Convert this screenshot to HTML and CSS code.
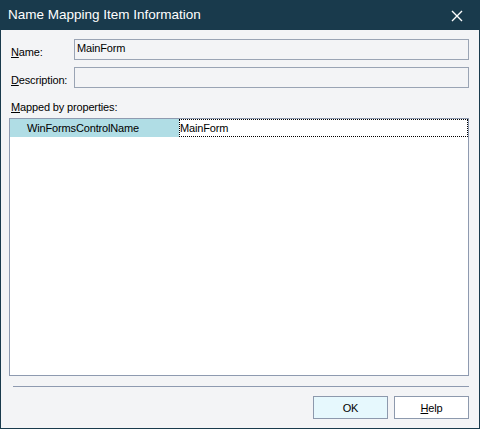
FILE: index.html
```html
<!DOCTYPE html>
<html lang="en">

<head>
  <meta charset="UTF-8">
  <link rel="stylesheet" href="styles.css">
  <title>Name Mapping Item Information</title>
</head>

<body>
  <div class="window">
    <div class="titlebar">
      <span class="title">Name Mapping Item Information</span>
      <span class="close">
        <svg width="12" height="12" viewBox="0 0 12 12">
          <path d="M1 1 L11 11 M11 1 L1 11" stroke="#fff" stroke-width="1.4" fill="none" />
        </svg>
      </span>
    </div>
    <div class="content">
      <div class="field">
        <label class="lbl"><u>N</u>ame:</label>
        <div class="input">MainForm</div>
      </div>
      <div class="field">
        <label class="lbl"><u>D</u>escription:</label>
        <div class="input"></div>
      </div>
      <div class="lbl mapped"><u>M</u>apped by properties:</div>
      <div class="grid">
        <div class="row">
          <div class="cell key">WinFormsControlName</div>
          <div class="cell val"><span class="focus">MainForm</span></div>
        </div>
      </div>
      <div class="sep"></div>
      <div class="buttons">
        <button class="btn default">OK</button>
        <button class="btn"><u>H</u>elp</button>
      </div>
    </div>
  </div>
</body>

</html>
```

FILE: styles.css
```css
html,
body {
  margin: 0;
  height: 100%;
  overflow: hidden;
}

body {
  font-family: "Liberation Sans", Arial, sans-serif;
  font-size: 11px;
  letter-spacing: -0.15px;
  color: #000;
}

.window {
  box-sizing: border-box;
  width: 480px;
  height: 429px;
  display: flex;
  flex-direction: column;
  background: #f3f4f6;
  border: 1px solid #193a4c;
  border-top: none;
}

.titlebar {
  height: 30px;
  margin: 0 -1px;
  background: #193a4c;
  color: #fff;
  display: flex;
  align-items: center;
  justify-content: space-between;
  padding: 0 17px 0 8px;
  flex: none;
}

.title {
  font-size: 13.5px;
  letter-spacing: 0;
  margin-top: -1px;
}

.close {
  display: flex;
  margin-top: 1px;
}

.content {
  flex: 1;
  display: flex;
  flex-direction: column;
  padding: 9px 10px 10px 8px;
}

.field {
  display: flex;
  align-items: center;
  height: 21px;
  margin-bottom: 7px;
}

.lbl {
  padding-left: 2px;
  line-height: 14px;
}

.field .lbl {
  width: 63px;
  flex: none;
  padding-top: 4px;
}

.input {
  flex: 1;
  box-sizing: border-box;
  height: 21px;
  border: 1px solid #9aa4b4;
  background: #f3f4f6;
  padding: 1px 2px;
  line-height: 15px;
}

.mapped {
  margin-top: 5px;
  height: 18px;
}

.grid {
  box-sizing: border-box;
  height: 258px;
  border: 1px solid #8e9ab0;
  background: #fff;
  flex: none;
}

.row {
  display: flex;
  height: 18px;
}

.cell {
  box-sizing: border-box;
  line-height: 18px;
}

.key {
  width: 169px;
  background: #b0dde5;
  padding-left: 17px;
}

.val {
  flex: 1;
}

.focus {
  display: block;
  box-sizing: border-box;
  height: 18px;
  border: 1px dotted #000;
  line-height: 16px;
}

.sep {
  height: 1px;
  background: #8e9ab0;
  margin: 10px 0 0 4px;
}

.buttons {
  display: flex;
  justify-content: flex-end;
  gap: 6px;
  margin-top: 9px;
}

.btn {
  width: 75px;
  height: 23px;
  box-sizing: border-box;
  border: 1px solid #8d99ad;
  background: #fff;
  font-family: "Liberation Sans", Arial, sans-serif;
  font-size: 11px;
  letter-spacing: -0.15px;
  padding: 0;
  color: #000;
}

.btn.default {
  background: #e6f8fd;
}
```
